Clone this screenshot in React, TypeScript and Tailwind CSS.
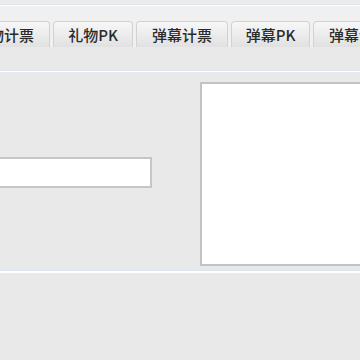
const tabs = [
  { label: "礼物计票", w: "w-[92px]" },
  { label: "礼物PK", w: "w-[80px]" },
  { label: "弹幕计票", w: "w-[92px]" },
  { label: "弹幕PK", w: "w-[79px]" },
  { label: "弹幕计票", w: "w-[92px]" },
];

export default function App() {
  return (
    <div
      className="flex h-[360px] w-[360px] flex-col overflow-hidden bg-[#e9e9e9]"
      style={{ fontFamily: '"Noto Sans CJK SC", "Noto Sans", sans-serif' }}
    >
      <div className="h-[4px] bg-[#ececec]" />
      <div className="h-[1px] bg-[#dde3ea]" />
      <div className="h-[1px] bg-white" />
      <div className="flex h-[41px] items-end bg-[#f0f0f0]">
        <div className="ml-[-42px] flex gap-[3px]">
          {tabs.map((t, i) => (
            <div
              key={i}
              className={`${t.w} flex h-[26px] shrink-0 items-center justify-center rounded-t-[4px] border border-b-0 border-[#d2d2d2] bg-gradient-to-b from-[#f7f7f7] to-[#e1e1e1] pt-[2px] text-[15px] font-medium text-[#2a2a2a]`}
            >
              {t.label}
            </div>
          ))}
        </div>
      </div>
      <div className="h-[23px]" />
      <div className="h-[1px] bg-[#dde3ea]" />
      <div className="h-[1px] bg-white" />
      <div className="flex h-[198px]">
        <div className="flex w-[200px] shrink-0 items-start pt-[85px]">
          <div className="ml-[-10px] h-[31px] w-[162px] border-2 border-[#c6c6ca] bg-white" />
        </div>
        <div className="mt-[10px] h-[184px] flex-1 border-b-2 border-l-2 border-t-2 border-[#c3c3c7] bg-white" />
      </div>
      <div className="h-[1px] bg-[#dde3ea]" />
      <div className="h-[2px] bg-white" />
      <div className="flex-1" />
    </div>
  );
}
